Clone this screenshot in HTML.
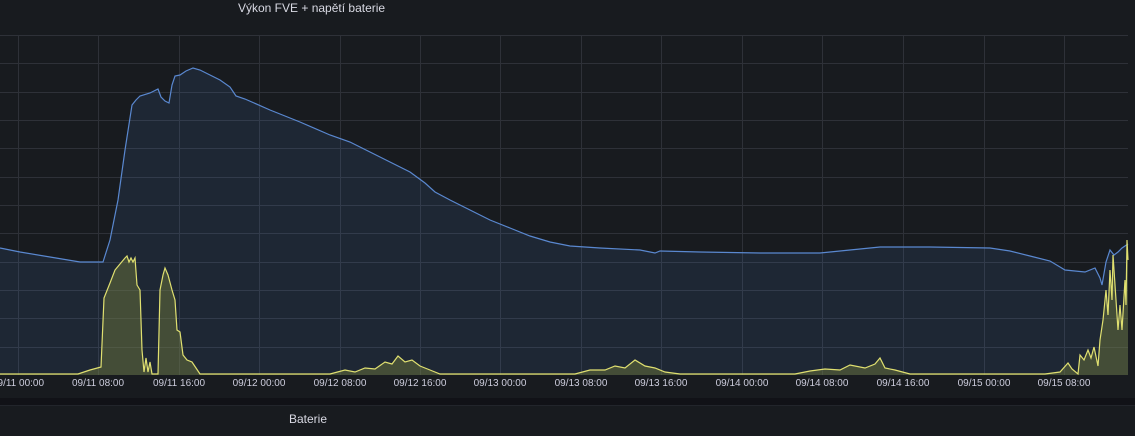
<!DOCTYPE html>
<html><head><meta charset="utf-8"><style>
html,body{margin:0;padding:0;background:#111217;width:1135px;height:422px;overflow:hidden;font-family:"Liberation Sans",sans-serif}
.p1{position:absolute;left:0;top:0;width:1135px;height:398px;background:#181b1f}
.p2{position:absolute;left:0;top:405px;width:1135px;height:30px;background:#181b1f;border-top:1px solid #22252b}
.t{position:absolute;color:#d8d9e3;font-size:12px}
.ax{position:absolute;top:378px;color:#ccccdc;font-size:10px;width:80px;text-align:center}
</style></head><body>
<div class="p1"></div>
<div class="p2"></div>
<div class="t" style="left:238px;top:1px">Výkon FVE + napětí baterie</div>
<div class="t" style="left:289px;top:412px">Baterie</div>
<svg width="1135" height="422" style="position:absolute;left:0;top:0">
<g stroke="#2e3138" stroke-width="1">
<line x1="0" y1="35.5" x2="1128" y2="35.5"/><line x1="0" y1="63.5" x2="1128" y2="63.5"/><line x1="0" y1="92.5" x2="1128" y2="92.5"/><line x1="0" y1="120.5" x2="1128" y2="120.5"/><line x1="0" y1="148.5" x2="1128" y2="148.5"/><line x1="0" y1="177.5" x2="1128" y2="177.5"/><line x1="0" y1="205.5" x2="1128" y2="205.5"/><line x1="0" y1="233.5" x2="1128" y2="233.5"/><line x1="0" y1="262.5" x2="1128" y2="262.5"/><line x1="0" y1="290.5" x2="1128" y2="290.5"/><line x1="0" y1="318.5" x2="1128" y2="318.5"/><line x1="0" y1="347.5" x2="1128" y2="347.5"/>
<line x1="18.5" y1="35" x2="18.5" y2="375"/><line x1="98.5" y1="35" x2="98.5" y2="375"/><line x1="179.5" y1="35" x2="179.5" y2="375"/><line x1="259.5" y1="35" x2="259.5" y2="375"/><line x1="340.5" y1="35" x2="340.5" y2="375"/><line x1="420.5" y1="35" x2="420.5" y2="375"/><line x1="500.5" y1="35" x2="500.5" y2="375"/><line x1="581.5" y1="35" x2="581.5" y2="375"/><line x1="661.5" y1="35" x2="661.5" y2="375"/><line x1="742.5" y1="35" x2="742.5" y2="375"/><line x1="822.5" y1="35" x2="822.5" y2="375"/><line x1="903.5" y1="35" x2="903.5" y2="375"/><line x1="984.5" y1="35" x2="984.5" y2="375"/><line x1="1064.5" y1="35" x2="1064.5" y2="375"/>
</g>
<path d="M0,248 L20,252 L50,257 L80,262 L103,262 L110,240 L118,200 L125,150 L132,105 L136,100 L140,96 L150,93 L158,89 L161,97 L165,101 L169,103 L172,85 L175,76 L180,75 L186,71 L193,68 L200,70 L210,75 L220,80 L230,87 L236,96 L245,99 L270,110 L300,122 L330,135 L350,142 L370,152 L390,162 L410,172 L425,183 L435,192 L450,200 L470,210 L490,220 L510,228 L530,236 L550,242 L570,246 L600,248 L640,250 L655,253 L660,251 L700,252 L760,253 L820,253 L850,250 L880,247 L930,247 L990,248 L1010,251 L1030,256 L1050,261 L1060,267 L1065,270 L1075,271 L1085,272 L1095,268 L1100,278 L1102,285 L1106,262 L1110,250 L1114,255 L1118,252 L1122,248 L1128,244 L1128,375 L0,375 Z" fill="rgba(87,148,242,0.1)"/>
<path d="M0,248 L20,252 L50,257 L80,262 L103,262 L110,240 L118,200 L125,150 L132,105 L136,100 L140,96 L150,93 L158,89 L161,97 L165,101 L169,103 L172,85 L175,76 L180,75 L186,71 L193,68 L200,70 L210,75 L220,80 L230,87 L236,96 L245,99 L270,110 L300,122 L330,135 L350,142 L370,152 L390,162 L410,172 L425,183 L435,192 L450,200 L470,210 L490,220 L510,228 L530,236 L550,242 L570,246 L600,248 L640,250 L655,253 L660,251 L700,252 L760,253 L820,253 L850,250 L880,247 L930,247 L990,248 L1010,251 L1030,256 L1050,261 L1060,267 L1065,270 L1075,271 L1085,272 L1095,268 L1100,278 L1102,285 L1106,262 L1110,250 L1114,255 L1118,252 L1122,248 L1128,244" fill="none" stroke="#5a88d0" stroke-width="1.2"/>
<path d="M0,374 L78,374 L90,370 L101,367 L104,298 L110,283 L115,270 L120,264 L125,258 L127,256 L129,262 L131,258 L133,262 L135,258 L137,285 L140,290 L142,350 L144,372 L146,358 L148,372 L150,362 L152,374 L158,374 L160,290 L163,275 L165,268 L168,275 L172,290 L175,300 L177,330 L180,332 L183,355 L187,360 L192,362 L196,368 L200,374 L330,374 L345,370 L355,372 L365,368 L375,369 L385,362 L392,364 L398,356 L405,362 L412,360 L420,366 L430,370 L440,374 L575,374 L590,370 L605,370 L615,366 L625,368 L635,360 L645,366 L655,368 L665,372 L680,374 L795,374 L810,371 L825,369 L840,370 L850,365 L865,368 L875,364 L880,358 L885,368 L895,370 L910,374 L1045,374 L1060,372 L1068,363 L1072,369 L1078,374 L1080,355 L1084,360 L1088,350 L1091,358 L1094,347 L1098,366 L1100,340 L1103,320 L1106,290 L1108,315 L1110,270 L1112,300 L1113,255 L1116,300 L1118,330 L1120,305 L1122,330 L1125,280 L1126,305 L1127,240 L1128,260 L1128,375 L0,375 Z" fill="rgba(115,125,60,0.45)"/>
<path d="M0,374 L78,374 L90,370 L101,367 L104,298 L110,283 L115,270 L120,264 L125,258 L127,256 L129,262 L131,258 L133,262 L135,258 L137,285 L140,290 L142,350 L144,372 L146,358 L148,372 L150,362 L152,374 L158,374 L160,290 L163,275 L165,268 L168,275 L172,290 L175,300 L177,330 L180,332 L183,355 L187,360 L192,362 L196,368 L200,374 L330,374 L345,370 L355,372 L365,368 L375,369 L385,362 L392,364 L398,356 L405,362 L412,360 L420,366 L430,370 L440,374 L575,374 L590,370 L605,370 L615,366 L625,368 L635,360 L645,366 L655,368 L665,372 L680,374 L795,374 L810,371 L825,369 L840,370 L850,365 L865,368 L875,364 L880,358 L885,368 L895,370 L910,374 L1045,374 L1060,372 L1068,363 L1072,369 L1078,374 L1080,355 L1084,360 L1088,350 L1091,358 L1094,347 L1098,366 L1100,340 L1103,320 L1106,290 L1108,315 L1110,270 L1112,300 L1113,255 L1116,300 L1118,330 L1120,305 L1122,330 L1125,280 L1126,305 L1127,240 L1128,260" fill="none" stroke="#e0e070" stroke-width="1.2"/>
</svg>
<div class="ax" style="left:-22px">09/11 00:00</div>
<div class="ax" style="left:58px">09/11 08:00</div>
<div class="ax" style="left:139px">09/11 16:00</div>
<div class="ax" style="left:219px">09/12 00:00</div>
<div class="ax" style="left:300px">09/12 08:00</div>
<div class="ax" style="left:380px">09/12 16:00</div>
<div class="ax" style="left:460px">09/13 00:00</div>
<div class="ax" style="left:541px">09/13 08:00</div>
<div class="ax" style="left:621px">09/13 16:00</div>
<div class="ax" style="left:702px">09/14 00:00</div>
<div class="ax" style="left:782px">09/14 08:00</div>
<div class="ax" style="left:863px">09/14 16:00</div>
<div class="ax" style="left:944px">09/15 00:00</div>
<div class="ax" style="left:1024px">09/15 08:00</div>
</body></html>
